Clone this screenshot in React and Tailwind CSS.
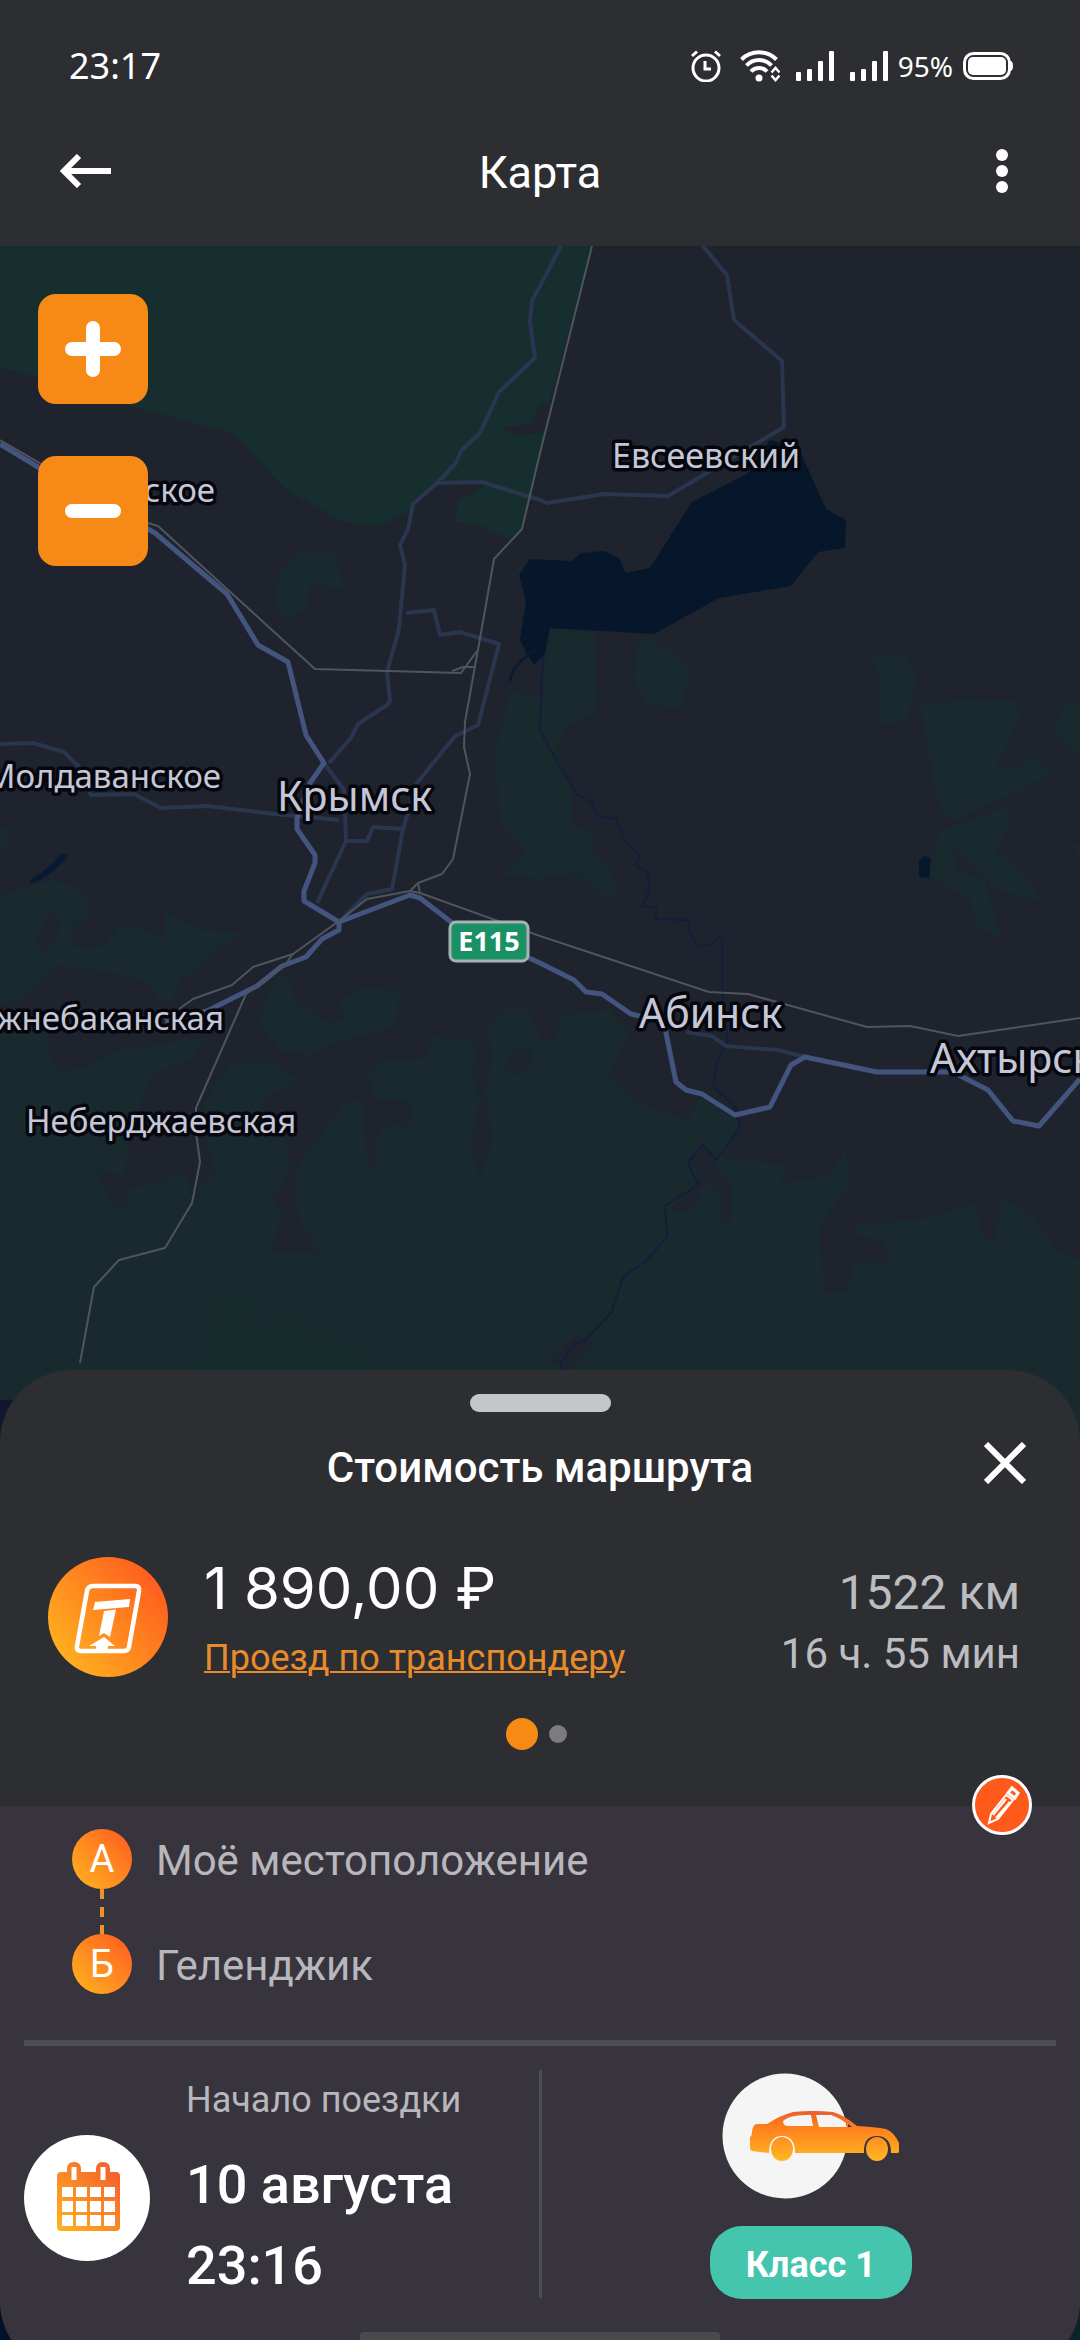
import { useState } from 'react';

const points = [
  { letter: 'А', name: 'Моё местоположение' },
  { letter: 'Б', name: 'Геленджик' },
];

const labels = [
  { text: 'Евсеевский', x: 612, y: 468, size: 34 },
  { text: 'Киевское', x: 215, y: 502, size: 33, anchor: 'end' },
  { text: 'Молдаванское', x: 221, y: 788, size: 33, anchor: 'end' },
  { text: 'Крымск', x: 277, y: 811, size: 41 },
  { text: 'Нижнебаканская', x: 224, y: 1030, size: 33, anchor: 'end' },
  { text: 'Неберджаевская', x: 26, y: 1133, size: 33 },
  { text: 'Абинск', x: 639, y: 1028, size: 41 },
  { text: 'Ахтырский', x: 930, y: 1073, size: 41 },
];

const forests = [
  'M0 1031H45L52 1060 62 1070 85 1068 110 1052 150 1045 208 1038 190 1060 150 1075 140 1105 128 1140 125 1175 98 1171 105 1190 117 1208 126 1205 128 1188 160 1183 185 1172 192 1195 200 1185 215 1175 205 1130 200 1110 230 1063 270 1062 290 1074 300 1078 262 1100 262 1125 288 1142 290 1170 280 1190 268 1192 282 1215 272 1253 318 1253 300 1218 294 1200 298 1165 325 1130 345 1102 362 1101 368 1165 376 1170 374 1140 390 1120 408 1128 413 1105 400 1100 375 1100 368 1075 380 1060 428 1058 432 1036 475 1042 474 1080 480 1100 471 1145 480 1178 492 1140 485 1090 492 1060 488 1030 500 1010 530 1010 540 1040 557 1040 560 1015 609 1009 630 1033 609 1073 640 1104 688 1120 700 1096 735 1116 740 1128 722 1158 781 1164 795 1179 826 1177 846 1150 848 1187 819 1227 824 1294 848 1290 853 1262 891 1262 884 1243 857 1235 857 1225 936 1217 974 1203 984 1239 995 1239 1001 1195 1036 1219 1053 1247 1080 1260V2340H0Z',
  'M0 895L30 885 55 880 85 892 90 915 75 925 72 945 88 948 105 945 120 925 145 930 165 940 165 912 203 930 245 932 215 950 205 965 180 980 172 1000 158 1000 150 985 125 975 90 970 60 965 40 980 20 1000 0 1005Z',
  'M0 826L10 830 8 845 0 850Z',
  'M262 1010L278 975 288 978 296 1003 330 1022 345 1020 340 1002 360 988 400 990 396 1025 370 1034 350 1038 310 1055 280 1050 262 1030Z',
  'M303 551H334L344 586 332 590 312 581 306 608 286 620 274 601 281 572Z',
  'M550 628L595 633 597 713 566 727 555 751 573 788 571 825 593 831 593 855 614 875 616 895 602 895 574 873 540 879 503 875 527 851 499 820 496 747 510 690 540 700Z',
  'M640 636L671 651 690 672 681 710 647 704 633 676Z',
  'M869 654L905 656 917 672 908 722 881 724 879 676Z',
  'M920 706L970 699 1015 701 1020 719 996 769 1015 769 1032 754 1053 772 1022 790 953 821 936 800 932 769Z',
  'M939 831L1008 806V827L995 851 1022 871 1043 903 1000 890 975 870 955 848V870L985 880 1001 938 977 926 970 899 929 877Z',
  'M1067 701L1080 704V755L1053 733Z',
  'M1080 845L1068 842 1080 860Z',
];

// просеки внутри леса
const clearings = [
  'M52 908L35 942 44 956 56 940 60 920Z',
  'M810 1137L825 1138 822 1150 805 1156 822 1160 818 1175 795 1180 778 1190 784 1172 800 1150Z',
  'M703 1140L715 1165 733 1190 730 1225 720 1220 722 1195 708 1180 690 1212 668 1210 690 1190 700 1175 688 1160Z',
  'M512 1050L505 1070 515 1075 530 1066 532 1050Z',
  'M550 1362L575 1335 596 1342 572 1370Z',
];

const thinRoads = [
  'M561 246L540 286 532 301 530 322 535 358 499 392 480 433 461 451 456 463 437 483 413 504 408 529 400 545 405 565 399 629 387 672 390 701 387 705 358 724 351 738 329 763',
  'M437 483L482 482 540 500 547 503 604 494 668 496 784 427 782 361 734 320 727 275 702 245',
  'M406 613L434 610 440 635 460 632 499 644 478 725 455 736 417 783 403 829 392 889 367 894 339 922',
  'M0 744L33 743 64 752 79 767 91 795 134 794 161 808 207 806 275 814 339 820',
  'M324 763L344 790 346 841 317 903M346 841H367L373 827 403 829',
  'M686 1032L712 1036 726 1046 778 1050 805 1057',
];

const highways = [
  'M0 444L38 467 90 500 148 529 155 533 227 594 258 645 288 662 306 735 324 763 310 783 297 818V829L315 855V863L304 891V901L339 922 410 895 420 898 451 922 540 963 574 980 586 992 602 994 631 1014 666 1022V1033L676 1082 686 1090 702 1094 735 1115 770 1107 791 1065 805 1057 877 1072H953L988 1090 1013 1121 1039 1126 1080 1079',
  'M339 922V930L322 939 306 957 282 966 257 986 207 1011 165 1021',
];

const rails = [
  'M0 440L38 462 90 496 148 523 158 526 227 589 315 669 461 673 477 651',
  'M592 246L540 453 522 529 494 559 479 644 465 722 464 747 470 774 453 859 442 874 418 883 410 891 367 899 339 921 293 954 253 967 232 985 193 999 179 1009',
  'M452 671L463 667H474',
  'M418 883L420 893M410 891L420 893 540 936 709 992 748 994 867 1027 910 1026 958 1036 1080 1018',
  'M293 954L284 966 246 994 196 1108V1132L200 1162 192 1203 165 1248 119 1260 94 1287 80 1363',
];

const lake =
  'M798 447L826 509 846 520 845 548 818 552 791 586 719 598 654 634 550 628 545 653 534 665 527 654 520 640 526 601 519 575 530 559 571 561 581 553 604 551 619 558 626 573 650 568 692 502 747 474 770 440Z';
const river =
  'M543 653L540 731 576 794 592 803 597 816 616 819 624 839 640 856 636 866 648 872 650 889 642 907H656V919L690 920 688 928 697 946 710 945 719 937 722 939V990L728 1041 717 1061 713 1086 736 1108 740 1127 717 1160 703 1145 688 1162 698 1185 665 1206 667 1237 647 1260 623 1277 611 1313 585 1340 573 1345 561 1363V1372';

const MapCanvas = () => (
  <svg
    className="absolute inset-0 w-full h-full"
    viewBox="0 246 1080 2094"
    preserveAspectRatio="xMidYMin slice"
    fill="none"
    strokeLinejoin="round"
  >
    <rect y="246" width="1080" height="2094" fill="#1e232e" />
    <path
      fill="#162f2e"
      d="M0 246H592L549 404 540 404 530 424 499 428 520 436 545 432 522 529 510 540 482 526 455 522 458 501 485 485 437 483 406 513 379 526 344 522 286 490 234 433 148 411 38 378 0 367Z"
    />
    {forests.map((d) => <path key={d} d={d} fill="#182a2d" />)}
    {clearings.map((d) => <path key={d} d={d} fill="#1f232e" />)}
    <path d="M218 1298L268 1294 240 1330 290 1318 310 1335 350 1340 380 1372H190L212 1345Z" fill="#172d2d" />
    <path d="M0 1400H30V1440H0Z" fill="#12172f" />
    <path d="M0 2280H40V2340H0Z" fill="#03122a" />
    <path d="M1040 2280H1080V2340H1040Z" fill="#0b232b" />
    <path d={river} stroke="#111f3a" strokeWidth="2" />
    <path d={lake} fill="#06172b" />
    <path d="M536 650Q512 664 510 681" stroke="#0c1b2f" strokeWidth="3" />
    <path d="M30 884Q50 878 68 856L62 853Q46 872 31 879Z" fill="#081a33" />
    <path d="M919 861L925 855 931 859 929 878 919 877Z" fill="#06182c" />
    {thinRoads.map((d) => <path key={d} d={d} stroke="#2a3650" strokeWidth="4" />)}
    {highways.map((d) => <path key={d} d={d} stroke="#43557f" strokeWidth="5" />)}
    {rails.map((d) => <path key={d} d={d} stroke="#4e555c" strokeWidth="2" />)}
    {labels.map((l) => (
      <text
        key={l.text}
        x={l.x}
        y={l.y}
        fontSize={l.size}
        textAnchor={l.anchor || 'start'}
        fill="#c5c7d8"
        stroke="#05070d"
        strokeWidth="7"
        paintOrder="stroke"
        className="font-['Noto_Sans',sans-serif]"
      >
        {l.text}
      </text>
    ))}
    <rect x="450" y="922" width="78" height="39" rx="6" fill="#1b9064" stroke="#a6b3b2" strokeWidth="3" />
    <text x="489" y="951" fontSize="27" fontWeight="700" textAnchor="middle" fill="#fff" className="font-['Noto_Sans',sans-serif]">
      E115
    </text>
  </svg>
);

const StatusBar = () => (
  <div className="mt-4 h-[100px] pl-[69px] pr-[66px] flex items-center justify-between">
    <span className="text-[36px] leading-none font-['Noto_Sans',sans-serif]">23:17</span>
    <div className="flex items-center">
      <svg width="30" height="32" viewBox="0 0 30 32" fill="none" stroke="#fff" strokeWidth="3">
        <circle cx="15" cy="18" r="13" />
        <path d="M14 11V19H20M1 6L6 1.500M29 6L24 1.500" />
      </svg>
      <svg className="ml-[19px]" width="40" height="32" viewBox="0 0 40 32" fill="none" stroke="#fff" strokeWidth="4">
        <path d="M1.500 9.500A25 25 0 0 1 36.500 9.500M6.500 15.500A17 17 0 0 1 31.500 15.500M11 21.500A11 11 0 0 1 27 21.500" />
        <circle cx="19" cy="28" r="3.500" fill="#fff" stroke="none" />
        <path d="M31.500 22.500L35.500 18 39.500 22.500M31.500 25.500L35.500 30 39.500 25.500" strokeWidth="2.500" />
      </svg>
      <Signal />
      <Signal />
      <span className="ml-2.5 text-[28px] leading-none font-['Noto_Sans',sans-serif]">95%</span>
      <svg className="ml-2.5" width="51" height="30" viewBox="0 0 51 30" fill="none">
        <rect x="1.500" y="2.500" width="45" height="25" rx="9" stroke="#fff" strokeWidth="3" />
        <rect x="5" y="6" width="38" height="18" rx="5" fill="#fff" />
        <path d="M47 10Q50 10 50 15T47 20Z" fill="#fff" />
      </svg>
    </div>
  </div>
);

const Signal = () => (
  <svg className="ml-4" width="38" height="30" viewBox="0 0 38 30" fill="#fff">
    <rect x="0" y="21" width="5" height="9" rx="1" />
    <rect x="11" y="18" width="5" height="12" rx="1" />
    <rect x="22" y="10" width="5" height="20" rx="1" />
    <rect x="33" y="0" width="5" height="30" rx="1" />
  </svg>
);

const ZoomButton = ({ label, path, onClick }) => (
  <button
    aria-label={label}
    onClick={onClick}
    className="size-[110px] rounded-[18px] bg-[#f78a17] flex items-center justify-center"
  >
    <svg width="56" height="56" viewBox="0 0 56 56" stroke="#fff" strokeWidth="14" strokeLinecap="round">
      <path d={path} />
    </svg>
  </button>
);

const TransponderIcon = () => (
  <svg className="shrink-0" width="120" height="120" viewBox="0 0 120 120">
    <defs>
      <linearGradient id="transponder" x1="0.1" y1="0.850" x2="0.9" y2="0.2">
        <stop offset="0" stopColor="#ffb01f" />
        <stop offset="1" stopColor="#ff5f1f" />
      </linearGradient>
    </defs>
    <circle cx="60" cy="60" r="60" fill="url(#transponder)" />
    <path d="M45 29H87Q92 29 91 34L81 90Q80 94 76 94H33Q28 94 29 89L39 34Q40 29 45 29Z" fill="none" stroke="#fff" strokeWidth="4.500" />
    <path d="M47 45L82 42 81 50 45 53ZM56 54L68 52.500 62 80 56 76 51 79ZM41 89L56 80 67 89H60L59 95H48V89Z" fill="#fff" />
  </svg>
);

const CalendarIcon = () => (
  <svg className="shrink-0 mt-[65px]" width="126" height="126" viewBox="0 0 126 126">
    <defs>
      <linearGradient id="calendar" x1="0" y1="1" x2="0.850" y2="0.1">
        <stop offset="0" stopColor="#ffb51f" />
        <stop offset="1" stopColor="#f5642b" />
      </linearGradient>
    </defs>
    <circle cx="63" cy="63" r="63" fill="#fff" />
    <path
      fill="url(#calendar)"
      fillRule="evenodd"
      d="M37 37H43V34Q43 27 50 27T57 34V37H72V34Q72 27 79 27T86 34V37H92Q96 37 96 41V92Q96 96 92 96H37Q33 96 33 92V41Q33 37 37 37ZM47.500 32V45H52.500V32ZM76.500 32V45H81.500V32ZM38 52V62H49V52ZM52 52V62H63V52ZM66 52V62H77V52ZM80 52V62H91V52ZM38 66V77H49V66ZM52 66V77H63V66ZM66 66V77H77V66ZM80 66V77H91V66ZM38 80V91H49V80ZM52 80V91H63V80ZM66 80V91H77V80ZM80 80V91H91V80Z"
    />
  </svg>
);

const CarIcon = () => (
  <svg width="182" height="128" viewBox="0 0 182 128">
    <defs>
      <linearGradient id="car" gradientUnits="userSpaceOnUse" x1="0" y1="40" x2="0" y2="89">
        <stop offset="0" stopColor="#e8612f" />
        <stop offset="0.250" stopColor="#ff7a1c" />
        <stop offset="1" stopColor="#ffb723" />
      </linearGradient>
    </defs>
    <circle cx="65" cy="64" r="62.500" fill="#f5f5f5" />
    <g fill="url(#car)">
      <path
        fillRule="evenodd"
        d="M32 79Q30 78 30 75V65Q32 64 32 60Q33 52 37 52H47Q61 43 73 40Q93 38 113 40Q124 43 137 54Q155 55 166 57Q174 60 179 71V80Q179 81 177 81H171Q171 64 157 64T144 81H75Q75 64 62 64T49 81ZM63 49Q63 54 68 54H93L91 43Q70 42 63 49ZM96 43L99 55H127V52Q120 46 111 43ZM128 52V55H132Z"
      />
      <ellipse cx="62" cy="77" rx="11" ry="12" />
      <ellipse cx="157" cy="77" rx="11" ry="12" />
    </g>
  </svg>
);

const EditIcon = () => (
  <svg width="40" height="40" viewBox="0 0 40 40" fill="none" stroke="#fff" strokeWidth="2">
    <path d="M7 38L9 29 24 10 31 15 16 34ZM11 30L24 14M14 33L28 17" />
    <path d="M26 8L30 3 36 8 33 13Z" strokeWidth="3" />
  </svg>
);

const App = () => {
  const [zoom, setZoom] = useState(11);
  const [open, setOpen] = useState(true);

  return (
    <div className="h-screen overflow-hidden flex flex-col bg-[#2d2e32] text-white font-[Roboto,sans-serif]">
      <header>
        <StatusBar />
        <div className="h-[110px] mb-5 px-[60px] grid grid-cols-[1fr_auto_1fr] items-center">
          <button aria-label="Назад" className="justify-self-start">
            <svg width="51" height="34" viewBox="0 0 51 34" fill="none" stroke="#fff" strokeWidth="6">
              <path d="M51 17H5M19 2L4 17 19 32" />
            </svg>
          </button>
          <h1 className="pt-1 text-[45px] leading-[56px]">Карта</h1>
          <button aria-label="Меню" className="justify-self-end w-9 flex justify-center">
            <svg width="12" height="44" viewBox="0 0 12 44" fill="#fff">
              <circle cx="6" cy="6" r="6" />
              <circle cx="6" cy="22" r="6" />
              <circle cx="6" cy="38" r="6" />
            </svg>
          </button>
        </div>
      </header>

      <main className="relative flex-1 flex flex-col justify-between">
        <MapCanvas />
        <div className="relative self-start pt-12 pl-[38px] flex flex-col gap-[52px]">
          <ZoomButton label="Приблизить" path="M28 7V49M7 28H49" onClick={() => setZoom(zoom + 1)} />
          <ZoomButton label="Отдалить" path="M7 28H49" onClick={() => setZoom(zoom - 1)} />
        </div>

        {open && (
          <div className="relative -mb-[33px] rounded-[72px] overflow-hidden bg-[#2d2e32]">
            <div className="mt-6 mx-auto w-[141px] h-[18px] rounded-[9px] bg-[#c5c6c8]" />
            <div className="mt-6 px-12 grid grid-cols-[1fr_auto_1fr] items-center">
              <h2 className="pt-1 col-start-2 text-[42px] leading-[56px] font-medium">Стоимость маршрута</h2>
              <button aria-label="Закрыть" onClick={() => setOpen(false)} className="justify-self-end self-start size-[54px] flex items-center justify-center">
                <svg width="42" height="42" viewBox="0 0 42 42" stroke="#fff" strokeWidth="6">
                  <path d="M2 2L40 40M40 2L2 40" />
                </svg>
              </button>
            </div>

            <div className="mt-14 pl-12 pr-[60px] flex items-center">
              <TransponderIcon />
              <div className="ml-9 flex-1">
                <p className="text-[58px] leading-[72px] font-[Inter,sans-serif]">1 890,00 ₽</p>
                <a href="#transponder" className="block mt-2.5 text-[36px] leading-[48px] text-[#e88c2a] underline decoration-2">
                  Проезд по транспондеру
                </a>
              </div>
              <div className="pt-2 text-right text-[#bcbdc0]">
                <p className="text-[48px] leading-[66px]">1522 км</p>
                <p className="text-[42px] leading-[56px]">16 ч. 55 мин</p>
              </div>
            </div>
            <div className="mt-9 mb-14 pr-2 flex items-center justify-center gap-[11px]">
              <span className="size-8 rounded-full bg-[#f78a17]" />
              <span className="size-[18px] rounded-full bg-[#7c7c80]" />
            </div>

            <section className="relative bg-[#37343e] pt-[23px] pb-8">
              <button
                aria-label="Изменить маршрут"
                className="absolute right-12 -top-[31px] size-[60px] rounded-full border-3 border-white bg-[#ff5a1c] flex items-center justify-center"
              >
                <EditIcon />
              </button>
              <ul className="pl-[72px]">
                {points.map((p, i) => (
                  <li key={p.letter}>
                    {i > 0 && (
                      <svg className="ml-7" width="4" height="45" viewBox="0 0 4 45" stroke="#f0922b" strokeWidth="4">
                        <path d="M2 0V45" strokeDasharray="10 8" />
                      </svg>
                    )}
                    <div className="h-[60px] flex gap-6 text-[#b8b7bb]">
                      <span className="size-[60px] rounded-full bg-linear-to-tr from-[#ffb51f] to-[#ff541f] text-[38px] leading-[60px] text-center text-white">
                        {p.letter}
                      </span>
                      <span className="text-[42px] leading-[64px]">{p.name}</span>
                    </div>
                  </li>
                ))}
              </ul>

              <hr className="mt-[46px] mx-6 h-1.5 border-0 bg-[#4d4b55]" />

              <div className="mt-6 grid grid-cols-[1fr_auto_1fr] items-start">
                <div className="pl-6 flex">
                  <CalendarIcon />
                  <div className="ml-9 pt-1.5">
                    <p className="text-[36px] leading-[48px] text-[#b8b7bb]">Начало поездки</p>
                    <p className="mt-5 text-[54px] leading-[81px] font-medium">
                      10 августа
                      <br />
                      23:16
                    </p>
                  </div>
                </div>
                <div className="w-[3px] h-[228px] bg-[#4d4b55]" />
                <div className="pt-0.5 flex flex-col items-center gap-[26px]">
                  <CarIcon />
                  <button className="pt-1 w-[202px] h-[73px] rounded-[32px] bg-[#45c5ae] text-[36px] font-bold">Класс 1</button>
                </div>
              </div>
              <div className="mt-[26px] mx-auto w-1/3 h-[9px] rounded-t bg-[#4a484f]" />
            </section>
          </div>
        )}
      </main>
    </div>
  );
};

export default App;
